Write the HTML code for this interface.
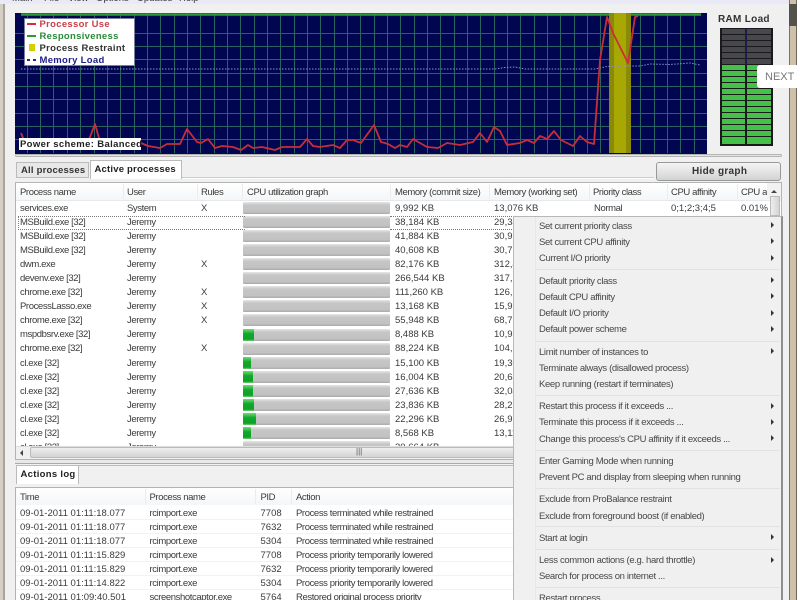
<!DOCTYPE html>
<html><head><meta charset="utf-8"><style>
html,body{margin:0;padding:0;width:800px;height:600px;overflow:hidden;background:#fff}
body{position:relative;font-family:"Liberation Sans",sans-serif;font-size:9.5px;color:#3a3a3a;letter-spacing:-.4px}
.a{position:absolute}
.t{position:absolute;white-space:nowrap;line-height:14px;transform:translateY(1px)}
.n{letter-spacing:0}
.bar{position:absolute;left:243px;width:147px;height:12px;background:linear-gradient(#e6e6e6,#c6c6c6 25%,#c2c2c2 80%,#aaa);border-radius:1px}
.bar i{position:absolute;left:0;top:0;height:12px;background:linear-gradient(#6fdc6f,#10a82c 40%,#10a02a 85%,#70d070)}
.m{position:absolute;left:539px;white-space:nowrap;line-height:14px;color:#484848;letter-spacing:-.35px;transform:translateY(1px)}
.ar{position:absolute;left:771px;width:0;height:0;border-left:3px solid #333;border-top:3px solid transparent;border-bottom:3px solid transparent}
.sep{position:absolute;left:536px;width:244px;height:1px;background:#e2e2e2}
.b{font-weight:bold}
.h{position:absolute;width:1px;height:15px;background:#ececec}
</style></head><body>
<div class="a" style="left:0;top:0;width:800px;height:600px;background:#f0f0f0"></div>
<div class="a" style="left:0;top:0;width:3px;height:600px;background:#d6cfc4"></div>
<div class="a" style="left:3px;top:0;width:2px;height:600px;background:#a8a39c"></div>
<div class="a" style="left:0;top:0;width:789px;height:4px;background:#e9e9f7"></div>
<div class="a" style="left:789px;top:0;width:1px;height:600px;background:#77736c"></div>
<div class="a" style="left:790px;top:0;width:6px;height:600px;background:#cfc0aa"></div>
<div class="a" style="left:796px;top:0;width:1px;height:600px;background:#6d665c"></div>
<div class="a" style="left:797px;top:0;width:3px;height:600px;background:#fff"></div>
<div class="a" style="left:789px;top:4px;width:8px;height:22px;background:#55524e"></div>
<div class="t n" style="left:12px;top:-9px">Main</div>
<div class="t n" style="left:44px;top:-9px">File</div>
<div class="t n" style="left:68px;top:-9px">View</div>
<div class="t n" style="left:96px;top:-9px">Options</div>
<div class="t n" style="left:137px;top:-9px">Updates</div>
<div class="t n" style="left:179px;top:-9px">Help</div>

<svg class="a" style="left:15px;top:13px" width="692" height="141" viewBox="15 13 692 141">
<rect x="15" y="13" width="692" height="141" fill="#00064f"/>
<g stroke="#2a625f" stroke-width="1" fill="none">
<path d="M15 33.5H707M15 46.5H707M15 59.5H707M15 73.5H707M15 86.5H707M15 99.5H707M15 113.5H707M15 126.5H707M15 139.5H707"/>
<path d="M27.5 13V153M40.5 13V153M53.5 13V153M67.5 13V153M80.5 13V153M94.5 13V153M107.5 13V153M120.5 13V153M134.5 13V153M147.5 13V153M160.5 13V153M174.5 13V153M187.5 13V153M200.5 13V153M214.5 13V153M227.5 13V153M240.5 13V153M254.5 13V153M267.5 13V153M280.5 13V153M294.5 13V153M307.5 13V153M320.5 13V153M334.5 13V153M347.5 13V153M360.5 13V153M374.5 13V153M387.5 13V153M400.5 13V153M414.5 13V153M427.5 13V153M440.5 13V153M454.5 13V153M467.5 13V153M480.5 13V153M494.5 13V153M507.5 13V153M520.5 13V153M534.5 13V153M547.5 13V153M560.5 13V153M574.5 13V153M587.5 13V153M600.5 13V153M614.5 13V153M627.5 13V153M640.5 13V153M654.5 13V153M667.5 13V153M680.5 13V153M694.5 13V153"/>
</g>
<rect x="609" y="13" width="22" height="140" fill="#8a8a08"/>
<rect x="614" y="13" width="12" height="140" fill="#a8a804"/>
<path d="M21 14.5H609M631 14.5H701" stroke="#2a9a3a" stroke-width="2.500" fill="none"/>
<path d="M21 69H495L505 67.5L515 67L525 69H595L607 66.500L625 66L640 66L650 64L670 64.500L690 63L700 65" stroke="#8f8fe0" stroke-width="1" stroke-dasharray="1.500 1.500" fill="none"/>
<polyline fill="none" stroke="#c82e3a" stroke-width="1.800" stroke-linejoin="round" points="21,133 25,143 60,148 85,148 90,137 95,124 99,138 104,146 141,143 148,146 160,148 167,144 180,144 187,129 197,142 201,143 208,139 215,148 222,146 233,147 241,150 248,145 253,148 262,147 275,150 282,147 293,147 300,147 307,139 313,146 320,147 333,145 340,148 347,140 353,140 361,143 374,125 381,142 388,144 395,148 400,145 407,147 413,139 420,143 427,147 438,148 447,143 460,145 473,142 480,133 487,142 494,127 500,131 507,145 520,143 527,140 534,143 540,136 547,139 554,131 561,140 573,146 580,136 587,142 594,144 600,60 607,17 613,33 628,63 635,17 638,16"/>
</svg>

<div class="a" style="left:24px;top:18px;width:111px;height:48px;background:#fff;border:1px solid #7a7f9c;box-sizing:border-box"></div>
<div class="a" style="left:27px;top:23px;width:9px;height:2px;background:#d0303c"></div>
<div class="a" style="left:27px;top:35px;width:9px;height:2px;background:#2a9a3a"></div>
<div class="a" style="left:29px;top:44px;width:6px;height:7px;background:#d4d000"></div>
<div class="a" style="left:27px;top:59px;width:3px;height:2px;background:#222a9a"></div>
<div class="a" style="left:33px;top:59px;width:3px;height:2px;background:#222a9a"></div>
<div class="t b" style="left:39.500px;top:17px;color:#c8404c;letter-spacing:.3px">Processor Use</div>
<div class="t b" style="left:39.500px;top:29px;color:#2a8a3a;letter-spacing:.3px">Responsiveness</div>
<div class="t b" style="left:39.500px;top:41px;color:#333;letter-spacing:.3px">Process Restraint</div>
<div class="t b" style="left:39.500px;top:53px;color:#20208a;letter-spacing:.3px">Memory Load</div>
<div class="a" style="left:19px;top:138px;width:122px;height:12px;background:#fff"></div>
<div class="t b" style="left:20px;top:137px;color:#222;letter-spacing:.35px">Power scheme: Balanced</div>

<div class="t b" style="left:718px;top:12px;font-size:10px;letter-spacing:.3px;color:#333">RAM Load</div>
<svg class="a" style="left:720px;top:28px" width="53" height="118" viewBox="0 0 53 118">
<rect width="53" height="118" fill="#1a1a1c"/>
<rect x="25" y="0" width="2" height="37" fill="#1c1c4a"/>
<g fill="#48484c">
<rect x="2" y="1" width="23" height="5"/><rect x="27" y="1" width="24" height="5"/>
<rect x="2" y="7" width="23" height="5"/><rect x="27" y="7" width="24" height="5"/>
<rect x="2" y="13" width="23" height="5"/><rect x="27" y="13" width="24" height="5"/>
<rect x="2" y="19" width="23" height="5"/><rect x="27" y="19" width="24" height="5"/>
<rect x="2" y="25" width="23" height="5"/><rect x="27" y="25" width="24" height="5"/>
<rect x="2" y="31" width="23" height="5"/><rect x="27" y="31" width="24" height="5"/>
</g>
<g fill="#45c14a">
<rect x="2" y="37" width="23" height="5"/><rect x="27" y="37" width="24" height="5"/>
<rect x="2" y="43" width="23" height="5"/><rect x="27" y="43" width="24" height="5"/>
<rect x="2" y="49" width="23" height="5"/><rect x="27" y="49" width="24" height="5"/>
<rect x="2" y="55" width="23" height="5"/><rect x="27" y="55" width="24" height="5"/>
<rect x="2" y="61" width="23" height="5"/><rect x="27" y="61" width="24" height="5"/>
<rect x="2" y="67" width="23" height="5"/><rect x="27" y="67" width="24" height="5"/>
<rect x="2" y="73" width="23" height="5"/><rect x="27" y="73" width="24" height="5"/>
<rect x="2" y="79" width="23" height="5"/><rect x="27" y="79" width="24" height="5"/>
<rect x="2" y="85" width="23" height="5"/><rect x="27" y="85" width="24" height="5"/>
<rect x="2" y="91" width="23" height="5"/><rect x="27" y="91" width="24" height="5"/>
<rect x="2" y="97" width="23" height="5"/><rect x="27" y="97" width="24" height="5"/>
<rect x="2" y="103" width="23" height="5"/><rect x="27" y="103" width="24" height="5"/>
<rect x="2" y="109" width="23" height="7"/><rect x="27" y="109" width="24" height="7"/>
</g>
</svg>
<div class="a" style="left:757px;top:65px;width:40px;height:23px;background:#fff;border-radius:3px 0 0 3px"></div>
<div class="t n" style="left:765px;top:69px;font-size:11px;color:#777">NEXT</div>

<div class="a" style="left:15px;top:154px;width:767px;height:3px;background:#e4e4e4;border:1px solid #b4b4b4;border-radius:2px;box-sizing:border-box"></div>

<div class="a" style="left:16px;top:162px;width:73px;height:16px;background:#e8e8e8;border:1px solid #bbb;box-sizing:border-box"></div>
<div class="t b" style="left:21px;top:163px;color:#333;letter-spacing:.2px">All processes</div>
<div class="a" style="left:90px;top:160px;width:92px;height:19px;background:#fff;border:1px solid #bbb;border-bottom:0;box-sizing:border-box"></div>
<div class="t b" style="left:94.500px;top:161.500px;color:#222;letter-spacing:.2px">Active processes</div>
<div class="a" style="left:182px;top:177px;width:472px;height:2px;background:#fcfcfc;border-top:1px solid #ccc;box-sizing:border-box"></div>
<div class="a" style="left:656px;top:162px;width:125px;height:19px;background:linear-gradient(#f4f4f4,#e4e4e4 50%,#d2d2d2);border:1px solid #999;border-radius:3px;box-sizing:border-box"></div>
<div class="t b" style="left:692px;top:164px;font-size:10px;letter-spacing:.3px;color:#333">Hide graph</div>

<!-- process table -->
<div class="a" style="left:15px;top:182px;width:767px;height:278px;background:#fff;border:1px solid #b4b4b4;box-sizing:border-box"></div>
<div class="a" style="left:16px;top:183px;width:765px;height:17px;background:linear-gradient(#fff,#f4f6f8)"></div>
<div class="a" style="left:16px;top:200px;width:765px;height:1px;background:#e8e8e8"></div>
<div class="t" style="left:20px;top:185px">Process name</div><div class="t" style="left:127px;top:185px">User</div><div class="t" style="left:201px;top:185px">Rules</div><div class="t" style="left:247px;top:185px">CPU utilization graph</div><div class="t" style="left:395px;top:185px">Memory (commit size)</div><div class="t" style="left:494px;top:185px">Memory (working set)</div><div class="t" style="left:593px;top:185px">Priority class</div><div class="t" style="left:671px;top:185px">CPU affinity</div><div class="t" style="left:741px;top:185px">CPU av</div>
<div class="h" style="left:123px;top:184px"></div><div class="h" style="left:197px;top:184px"></div><div class="h" style="left:242px;top:184px"></div><div class="h" style="left:390px;top:184px"></div><div class="h" style="left:489px;top:184px"></div><div class="h" style="left:589px;top:184px"></div><div class="h" style="left:667px;top:184px"></div><div class="h" style="left:737px;top:184px"></div>

<div class="a" style="left:767px;top:183px;width:14px;height:16px;background:#f2f2f2"></div>
<div class="a" style="left:771px;top:190px;width:0;height:0;border-left:3px solid transparent;border-right:3px solid transparent;border-bottom:3px solid #444"></div>
<div class="a" style="left:770px;top:196px;width:10px;height:20px;background:linear-gradient(90deg,#eee,#d4d4d4);border:1px solid #bbb;box-sizing:border-box"></div>

<div class="t" style="left:20px;top:201px">services.exe</div><div class="t" style="left:127px;top:201px">System</div><div class="t" style="left:201px;top:201px">X</div><div class="bar" style="top:202px"></div><div class="t n" style="left:395px;top:201px">9,992 KB</div><div class="t n" style="left:494px;top:201px">13,076 KB</div><div class="t" style="left:594px;top:201px">Normal</div><div class="t n" style="left:671px;top:201px">0;1;2;3;4;5</div><div class="t n" style="left:741px;top:201px">0.01%</div>
<div class="t" style="left:20px;top:215px">MSBuild.exe [32]</div><div class="t" style="left:127px;top:215px">Jeremy</div><div class="bar" style="top:216px"></div><div class="t n" style="left:395px;top:215px">38,184 KB</div><div class="t n" style="left:494px;top:215px">29,34</div>
<div class="t" style="left:20px;top:229px">MSBuild.exe [32]</div><div class="t" style="left:127px;top:229px">Jeremy</div><div class="bar" style="top:230px"></div><div class="t n" style="left:395px;top:229px">41,884 KB</div><div class="t n" style="left:494px;top:229px">30,92</div>
<div class="t" style="left:20px;top:243px">MSBuild.exe [32]</div><div class="t" style="left:127px;top:243px">Jeremy</div><div class="bar" style="top:244px"></div><div class="t n" style="left:395px;top:243px">40,608 KB</div><div class="t n" style="left:494px;top:243px">30,77</div>
<div class="t" style="left:20px;top:257px">dwm.exe</div><div class="t" style="left:127px;top:257px">Jeremy</div><div class="t" style="left:201px;top:257px">X</div><div class="bar" style="top:258px"></div><div class="t n" style="left:395px;top:257px">82,176 KB</div><div class="t n" style="left:494px;top:257px">312,4</div>
<div class="t" style="left:20px;top:271px">devenv.exe [32]</div><div class="t" style="left:127px;top:271px">Jeremy</div><div class="bar" style="top:272px"></div><div class="t n" style="left:395px;top:271px">266,544 KB</div><div class="t n" style="left:494px;top:271px">317,9</div>
<div class="t" style="left:20px;top:285px">chrome.exe [32]</div><div class="t" style="left:127px;top:285px">Jeremy</div><div class="t" style="left:201px;top:285px">X</div><div class="bar" style="top:286px"></div><div class="t n" style="left:395px;top:285px">111,260 KB</div><div class="t n" style="left:494px;top:285px">126,6</div>
<div class="t" style="left:20px;top:299px">ProcessLasso.exe</div><div class="t" style="left:127px;top:299px">Jeremy</div><div class="t" style="left:201px;top:299px">X</div><div class="bar" style="top:300px"></div><div class="t n" style="left:395px;top:299px">13,168 KB</div><div class="t n" style="left:494px;top:299px">15,93</div>
<div class="t" style="left:20px;top:313px">chrome.exe [32]</div><div class="t" style="left:127px;top:313px">Jeremy</div><div class="t" style="left:201px;top:313px">X</div><div class="bar" style="top:314px"></div><div class="t n" style="left:395px;top:313px">55,948 KB</div><div class="t n" style="left:494px;top:313px">68,72</div>
<div class="t" style="left:20px;top:327px">mspdbsrv.exe [32]</div><div class="t" style="left:127px;top:327px">Jeremy</div><div class="bar" style="top:329px"><i style="width:11px"></i></div><div class="t n" style="left:395px;top:327px">8,488 KB</div><div class="t n" style="left:494px;top:327px">10,98</div>
<div class="t" style="left:20px;top:341px">chrome.exe [32]</div><div class="t" style="left:127px;top:341px">Jeremy</div><div class="t" style="left:201px;top:341px">X</div><div class="bar" style="top:343px"></div><div class="t n" style="left:395px;top:341px">88,224 KB</div><div class="t n" style="left:494px;top:341px">104,8</div>
<div class="t" style="left:20px;top:356px">cl.exe [32]</div><div class="t" style="left:127px;top:356px">Jeremy</div><div class="bar" style="top:357px"><i style="width:8px"></i></div><div class="t n" style="left:395px;top:356px">15,100 KB</div><div class="t n" style="left:494px;top:356px">19,30</div>
<div class="t" style="left:20px;top:370px">cl.exe [32]</div><div class="t" style="left:127px;top:370px">Jeremy</div><div class="bar" style="top:371px"><i style="width:10px"></i></div><div class="t n" style="left:395px;top:370px">16,004 KB</div><div class="t n" style="left:494px;top:370px">20,64</div>
<div class="t" style="left:20px;top:384px">cl.exe [32]</div><div class="t" style="left:127px;top:384px">Jeremy</div><div class="bar" style="top:385px"><i style="width:10px"></i></div><div class="t n" style="left:395px;top:384px">27,636 KB</div><div class="t n" style="left:494px;top:384px">32,04</div>
<div class="t" style="left:20px;top:398px">cl.exe [32]</div><div class="t" style="left:127px;top:398px">Jeremy</div><div class="bar" style="top:399px"><i style="width:11px"></i></div><div class="t n" style="left:395px;top:398px">23,836 KB</div><div class="t n" style="left:494px;top:398px">28,26</div>
<div class="t" style="left:20px;top:412px">cl.exe [32]</div><div class="t" style="left:127px;top:412px">Jeremy</div><div class="bar" style="top:413px"><i style="width:13px"></i></div><div class="t n" style="left:395px;top:412px">22,296 KB</div><div class="t n" style="left:494px;top:412px">26,99</div>
<div class="t" style="left:20px;top:426px">cl.exe [32]</div><div class="t" style="left:127px;top:426px">Jeremy</div><div class="bar" style="top:427px"><i style="width:8px"></i></div><div class="t n" style="left:395px;top:426px">8,568 KB</div><div class="t n" style="left:494px;top:426px">13,11</div>
<div class="t" style="left:20px;top:440px">cl.exe [32]</div><div class="t" style="left:127px;top:440px">Jeremy</div><div class="bar" style="top:441px"></div><div class="t n" style="left:395px;top:440px">20,664 KB</div>

<div class="a" style="left:18px;top:216px;width:226px;height:12px;border:1px dotted #777;border-right:0"></div>
<div class="a" style="left:390px;top:216px;width:150px;height:12px;border-top:1px dotted #777;border-bottom:1px dotted #777"></div>

<!-- h scrollbar -->
<div class="a" style="left:16px;top:446px;width:765px;height:13px;background:#f0f0f0;border-top:1px solid #ddd;box-sizing:border-box"></div>
<div class="a" style="left:30px;top:447px;width:500px;height:11px;background:linear-gradient(#eee,#d4d4d4);border:1px solid #bbb;border-radius:2px;box-sizing:border-box"></div>
<div class="a" style="left:20px;top:450px;width:0;height:0;border-right:3px solid #444;border-top:3px solid transparent;border-bottom:3px solid transparent"></div>
<div class="t n" style="left:356px;top:444px;font-size:8px;color:#555">|||</div>
<div class="a" style="left:15px;top:460px;width:767px;height:4px;background:#e8e8e8;border-bottom:1px solid #aaa;box-sizing:border-box"></div>

<!-- actions log -->
<div class="a" style="left:16px;top:465px;width:763px;height:18px;background:#f0f0f0;border-top:1px solid #bbb;box-sizing:border-box"></div>
<div class="a" style="left:16px;top:465px;width:63px;height:19px;background:#fff;border:1px solid #bbb;border-bottom:0;box-sizing:border-box"></div>
<div class="t b" style="left:20.500px;top:467px;color:#222;letter-spacing:.3px">Actions log</div>
<div class="a" style="left:15px;top:487px;width:767px;height:113px;background:#fff;border:1px solid #b4b4b4;border-bottom:0;box-sizing:border-box"></div>
<div class="a" style="left:16px;top:488px;width:765px;height:17px;background:linear-gradient(#fff,#f4f6f8)"></div>
<div class="t" style="left:20px;top:490px">Time</div><div class="t" style="left:149.500px;top:490px">Process name</div><div class="t" style="left:260.500px;top:490px">PID</div><div class="t" style="left:296px;top:490px">Action</div>
<div class="h" style="left:145px;top:489px"></div><div class="h" style="left:255px;top:489px"></div><div class="h" style="left:291px;top:489px"></div>
<div class="a" style="left:16px;top:519px;width:500px;height:1px;background:#f2f2f2"></div><div class="a" style="left:16px;top:533px;width:500px;height:1px;background:#f2f2f2"></div><div class="a" style="left:16px;top:547px;width:500px;height:1px;background:#f2f2f2"></div><div class="a" style="left:16px;top:561px;width:500px;height:1px;background:#f2f2f2"></div><div class="a" style="left:16px;top:575px;width:500px;height:1px;background:#f2f2f2"></div><div class="a" style="left:16px;top:589px;width:500px;height:1px;background:#f2f2f2"></div>

<div class="t n" style="left:20px;top:506px">09-01-2011 01:11:18.077</div><div class="t" style="left:149.500px;top:506px">rcimport.exe</div><div class="t n" style="left:260.500px;top:506px">7708</div><div class="t" style="left:296px;top:506px">Process terminated while restrained</div>
<div class="t n" style="left:20px;top:520px">09-01-2011 01:11:18.077</div><div class="t" style="left:149.500px;top:520px">rcimport.exe</div><div class="t n" style="left:260.500px;top:520px">7632</div><div class="t" style="left:296px;top:520px">Process terminated while restrained</div>
<div class="t n" style="left:20px;top:534px">09-01-2011 01:11:18.077</div><div class="t" style="left:149.500px;top:534px">rcimport.exe</div><div class="t n" style="left:260.500px;top:534px">5304</div><div class="t" style="left:296px;top:534px">Process terminated while restrained</div>
<div class="t n" style="left:20px;top:548px">09-01-2011 01:11:15.829</div><div class="t" style="left:149.500px;top:548px">rcimport.exe</div><div class="t n" style="left:260.500px;top:548px">7708</div><div class="t" style="left:296px;top:548px">Process priority temporarily lowered</div>
<div class="t n" style="left:20px;top:562px">09-01-2011 01:11:15.829</div><div class="t" style="left:149.500px;top:562px">rcimport.exe</div><div class="t n" style="left:260.500px;top:562px">7632</div><div class="t" style="left:296px;top:562px">Process priority temporarily lowered</div>
<div class="t n" style="left:20px;top:576px">09-01-2011 01:11:14.822</div><div class="t" style="left:149.500px;top:576px">rcimport.exe</div><div class="t n" style="left:260.500px;top:576px">5304</div><div class="t" style="left:296px;top:576px">Process priority temporarily lowered</div>
<div class="t n" style="left:20px;top:590px">09-01-2011 01:09:40.501</div><div class="t" style="left:149.500px;top:590px">screenshotcaptor.exe</div><div class="t n" style="left:260.500px;top:590px">5764</div><div class="t" style="left:296px;top:590px">Restored original process priority</div>

<!-- context menu -->
<div class="a" style="left:513px;top:216px;width:270px;height:384px;background:#f0f0f0;border:1px solid #b8b8b8;border-right:2px solid #8e8e8e;border-bottom:0;box-sizing:border-box"></div>
<div class="a" style="left:535px;top:217px;width:1px;height:383px;background:#e6e6e6"></div>
<div class="m" style="top:219px">Set current priority class</div><div class="ar" style="top:222px"></div>
<div class="m" style="top:235px">Set current CPU affinity</div><div class="ar" style="top:238px"></div>
<div class="m" style="top:251px">Current I/O priority</div><div class="ar" style="top:255px"></div>
<div class="sep" style="top:269px"></div>
<div class="m" style="top:274px">Default priority class</div><div class="ar" style="top:277px"></div>
<div class="m" style="top:290px">Default CPU affinity</div><div class="ar" style="top:293px"></div>
<div class="m" style="top:306px">Default I/O priority</div><div class="ar" style="top:310px"></div>
<div class="m" style="top:322px">Default power scheme</div><div class="ar" style="top:326px"></div>
<div class="sep" style="top:341px"></div>
<div class="m" style="top:345px">Limit number of instances to</div><div class="ar" style="top:348px"></div>
<div class="m" style="top:361px">Terminate always (disallowed process)</div>
<div class="m" style="top:377px">Keep running (restart if terminates)</div>
<div class="sep" style="top:395px"></div>
<div class="m" style="top:399px">Restart this process if it exceeds ...</div><div class="ar" style="top:403px"></div>
<div class="m" style="top:415px">Terminate this process if it exceeds ...</div><div class="ar" style="top:419px"></div>
<div class="m" style="top:432px">Change this process's CPU affinity if it exceeds ...</div><div class="ar" style="top:435px"></div>
<div class="sep" style="top:450px"></div>
<div class="m" style="top:454px">Enter Gaming Mode when running</div>
<div class="m" style="top:470px">Prevent PC and display from sleeping when running</div>
<div class="sep" style="top:488px"></div>
<div class="m" style="top:492px">Exclude from ProBalance restraint</div>
<div class="m" style="top:509px">Exclude from foreground boost (if enabled)</div>
<div class="sep" style="top:526px"></div>
<div class="m" style="top:531px">Start at login</div><div class="ar" style="top:534px"></div>
<div class="sep" style="top:549px"></div>
<div class="m" style="top:553px">Less common actions (e.g. hard throttle)</div><div class="ar" style="top:557px"></div>
<div class="m" style="top:569px">Search for process on internet ...</div>
<div class="sep" style="top:587px"></div>
<div class="m" style="top:591px">Restart process</div>
</body></html>
